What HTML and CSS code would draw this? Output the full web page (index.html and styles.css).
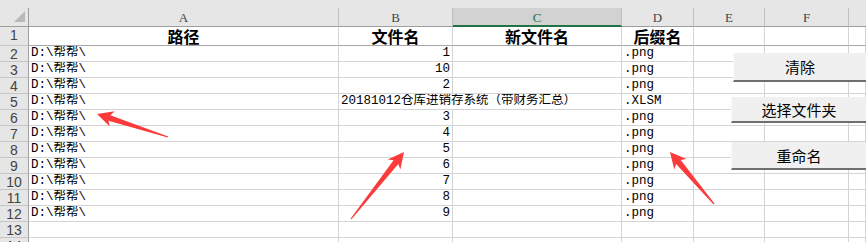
FILE: index.html
```html
<!DOCTYPE html>
<html lang="zh-CN">
<head>
    <meta charset="UTF-8">
    <title>重命名</title>
    <link rel="stylesheet" href="styles.css">
</head>
<body>
    <div class="topbar"></div>
    <div class="sheet">
        <!-- column headers -->
        <div class="cell corner">
            <svg width="11" height="11" viewBox="0 0 11 11"><polygon points="0,11 11,11 11,0" fill="#b9b9b9"/></svg>
        </div>
        <div class="cell colhead">A</div>
        <div class="cell colhead">B</div>
        <div class="cell colhead active">C</div>
        <div class="cell colhead">D</div>
        <div class="cell colhead">E</div>
        <div class="cell colhead">F</div>
        <div class="cell colhead last"></div>

        <!-- row 1 -->
        <div class="cell rowhead">1</div>
        <div class="cell title">路径</div>
        <div class="cell title">文件名</div>
        <div class="cell title">新文件名</div>
        <div class="cell title">后缀名</div>
        <div class="cell title"></div>
        <div class="cell title"></div>
        <div class="cell title"></div>

        <div class="cell rowhead">2</div>
        <div class="cell text">D:\帮帮\</div>
        <div class="cell num">1</div>
        <div class="cell"></div>
        <div class="cell text">.png</div>
        <div class="cell"></div><div class="cell"></div><div class="cell"></div>

        <div class="cell rowhead">3</div>
        <div class="cell text">D:\帮帮\</div>
        <div class="cell num">10</div>
        <div class="cell"></div>
        <div class="cell text">.png</div>
        <div class="cell"></div><div class="cell"></div><div class="cell"></div>

        <div class="cell rowhead">4</div>
        <div class="cell text">D:\帮帮\</div>
        <div class="cell num">2</div>
        <div class="cell"></div>
        <div class="cell text">.png</div>
        <div class="cell"></div><div class="cell"></div><div class="cell"></div>

        <div class="cell rowhead">5</div>
        <div class="cell text">D:\帮帮\</div>
        <div class="cell text wide">20181012仓库进销存系统（带财务汇总）</div>
        <div class="cell text">.XLSM</div>
        <div class="cell"></div><div class="cell"></div><div class="cell"></div>

        <div class="cell rowhead">6</div>
        <div class="cell text">D:\帮帮\</div>
        <div class="cell num">3</div>
        <div class="cell"></div>
        <div class="cell text">.png</div>
        <div class="cell"></div><div class="cell"></div><div class="cell"></div>

        <div class="cell rowhead">7</div>
        <div class="cell text">D:\帮帮\</div>
        <div class="cell num">4</div>
        <div class="cell"></div>
        <div class="cell text">.png</div>
        <div class="cell"></div><div class="cell"></div><div class="cell"></div>

        <div class="cell rowhead">8</div>
        <div class="cell text">D:\帮帮\</div>
        <div class="cell num">5</div>
        <div class="cell"></div>
        <div class="cell text">.png</div>
        <div class="cell"></div><div class="cell"></div><div class="cell"></div>

        <div class="cell rowhead">9</div>
        <div class="cell text">D:\帮帮\</div>
        <div class="cell num">6</div>
        <div class="cell"></div>
        <div class="cell text">.png</div>
        <div class="cell"></div><div class="cell"></div><div class="cell"></div>

        <div class="cell rowhead">10</div>
        <div class="cell text">D:\帮帮\</div>
        <div class="cell num">7</div>
        <div class="cell"></div>
        <div class="cell text">.png</div>
        <div class="cell"></div><div class="cell"></div><div class="cell"></div>

        <div class="cell rowhead">11</div>
        <div class="cell text">D:\帮帮\</div>
        <div class="cell num">8</div>
        <div class="cell"></div>
        <div class="cell text">.png</div>
        <div class="cell"></div><div class="cell"></div><div class="cell"></div>

        <div class="cell rowhead">12</div>
        <div class="cell text">D:\帮帮\</div>
        <div class="cell num">9</div>
        <div class="cell"></div>
        <div class="cell text">.png</div>
        <div class="cell"></div><div class="cell"></div><div class="cell"></div>

        <div class="cell rowhead">13</div>
        <div class="cell"></div><div class="cell"></div><div class="cell"></div><div class="cell"></div>
        <div class="cell"></div><div class="cell"></div><div class="cell"></div>

        <div class="cell rowhead">14</div>
        <div class="cell"></div><div class="cell"></div><div class="cell"></div><div class="cell"></div>
        <div class="cell"></div><div class="cell"></div><div class="cell"></div>
    </div>

    <!-- form buttons placed on the sheet -->
    <button class="btn btn-clear">清除</button>
    <button class="btn btn-folder">选择文件夹</button>
    <button class="btn btn-rename">重命名</button>

    <!-- annotation arrows -->
    <svg class="arrows" width="866" height="242" viewBox="0 0 866 242">
        <g fill="#fb3b3b">
            <g transform="translate(168 137) rotate(-162.05)">
                <polygon points="0,-0.6 61.6,-3 58.6,-8 74.6,0 58.6,8 61.6,3 0,0.6"/>
            </g>
            <g transform="translate(351 219) rotate(-51.66)">
                <polygon points="0,-0.6 72.4,-3 69.4,-8 85.4,0 69.4,8 72.4,3 0,0.6"/>
            </g>
            <g transform="translate(714 204) rotate(-130.24)">
                <polygon points="0,-0.6 55.1,-3 52.1,-8 68.1,0 52.1,8 55.1,3 0,0.6"/>
            </g>
        </g>
    </svg>
</body>
</html>
```

FILE: styles.css
```css
/* Excel-like sheet */
body {
    margin: 0;
    width: 866px;
    height: 242px;
    overflow: hidden;
    background: #fff;
    font-family: "Liberation Mono", "Noto Sans CJK SC", monospace;
    position: relative;
}
.topbar {
    height: 8px;
    background: #e6e6e6;
}
.sheet {
    display: grid;
    grid-template-columns: 29px 310px 114px 169px 72px 71px 84px 1fr;
    grid-template-rows: 19px 19px repeat(13, 16px);
}
.cell {
    box-sizing: border-box;
    border-right: 1px solid #d4d4d4;
    border-bottom: 1px solid #d4d4d4;
    white-space: nowrap;
    overflow: hidden;
    font-size: 12.5px;
    line-height: 15px;
    color: #000;
}
.corner {
    background: #e6e6e6;
    border-right: 1px solid #9e9e9e;
    border-bottom: 1px solid #9e9e9e;
    display: flex;
    align-items: flex-end;
    justify-content: flex-end;
    padding: 0 3px 4px 0;
}
.corner svg {
    display: block;
}
.colhead {
    background: #e6e6e6;
    border-right: 1px solid #bfbfbf;
    border-bottom: 1px solid #9e9e9e;
    text-align: center;
    font-family: "Liberation Serif", "Noto Sans CJK SC", serif;
    font-size: 13px;
    line-height: 20px;
    color: #444;
}
.colhead.active {
    background: #d2d2d2;
    color: #217346;
    border-bottom: 2px solid #217346;
}
.colhead.last {
    border-right: none;
}
.rowhead {
    background: #e6e6e6;
    border-right: 1px solid #9e9e9e;
    border-bottom: 1px solid #c6c6c6;
    text-align: center;
    font-family: "Liberation Sans", sans-serif;
    font-size: 14px;
    line-height: 16px;
    color: #444;
}
.title {
    border-bottom-color: #a6a6a6;
    text-align: center;
    font-family: "Noto Sans CJK SC", sans-serif;
    font-weight: bold;
    font-size: 16px;
    line-height: 18px;
    overflow: visible;
}
.text {
    padding-left: 2px;
}
.num {
    text-align: right;
    padding-right: 2px;
}
.wide {
    grid-column: span 2;
}
.btn {
    position: absolute;
    left: 731px;
    width: 135px;
    box-sizing: border-box;
    background: #f0f0f0;
    border: none;
    border-left: 1px solid #fafafa;
    border-bottom: 2px solid #6e6e6e;
    padding: 0;
    font-family: "Noto Sans CJK SC", sans-serif;
    font-size: 15px;
    color: #000;
}
.btn-clear {
    left: 733px;
    width: 133px;
    top: 53px;
    height: 29px;
}
.btn-folder {
    top: 97px;
    height: 26px;
}
.btn-rename {
    top: 142px;
    height: 28px;
}
.arrows {
    position: absolute;
    left: 0;
    top: 0;
    pointer-events: none;
}
```
